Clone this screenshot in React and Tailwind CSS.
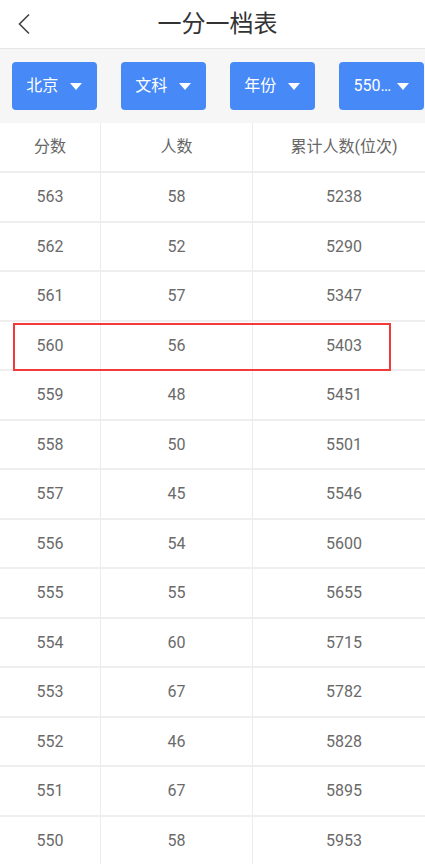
import React from 'react';

const rows = [
  [563, 58, 5238],
  [562, 52, 5290],
  [561, 57, 5347],
  [560, 56, 5403],
  [559, 48, 5451],
  [558, 50, 5501],
  [557, 45, 5546],
  [556, 54, 5600],
  [555, 55, 5655],
  [554, 60, 5715],
  [553, 67, 5782],
  [552, 46, 5828],
  [551, 67, 5895],
  [550, 58, 5953],
];

const filters = [
  { label: '北京', gap: 'gap-[12px]' },
  { label: '文科', gap: 'gap-[12px]' },
  { label: '年份', gap: 'gap-[12px]' },
  { label: '550…', gap: 'gap-[6px]' },
];

const Caret = () => (
  <svg width="12" height="7" viewBox="0 0 12 7">
    <path d="M0 0 L12 0 L6 7 Z" fill="#fff" />
  </svg>
);

const App = () => {
  return (
    <div className="w-[425px] h-[864px] overflow-hidden bg-white font-['Roboto','Noto_Sans_CJK_SC',sans-serif]">
      {/* top bar */}
      <div className="relative h-[49px] border-b border-[#e6e6e6] flex items-center justify-center">
        <svg className="absolute left-[17px] top-[13px]" width="14" height="22" viewBox="0 0 14 22">
          <path d="M12 1.5 L2.5 11 L12 20.5" fill="none" stroke="#444" strokeWidth="1.6" />
        </svg>
        <h1 className="ml-[10px] text-[24px] text-[#333] leading-none">一分一档表</h1>
      </div>

      {/* filters */}
      <div className="h-[74px] bg-[#f6f6f6] flex items-center gap-[24.5px] px-[12px]">
        {filters.map((f) => (
          <div
            key={f.label}
            className={`shrink-0 w-[84.5px] h-[48.5px] rounded-[4px] bg-[#4689f7] flex items-center justify-center ${f.gap}`}
          >
            <span className="text-white text-[16px] leading-none">{f.label}</span>
            <Caret />
          </div>
        ))}
      </div>

      {/* table, a little wider than the screen */}
      <div className="w-[435px]">
        <div className="grid grid-cols-[101px_152px_182px] h-[50px] border-b-2 border-[#eeeeee] text-[16px] text-[#666]">
          <div className="flex items-center justify-center border-r border-[#ececec]">分数</div>
          <div className="flex items-center justify-center border-r border-[#ececec]">人数</div>
          <div className="flex items-center justify-center">累计人数(位次)</div>
        </div>
        {rows.map(([score, count, total]) => (
          <div
            key={score}
            className="relative grid grid-cols-[101px_152px_182px] h-[49.5px] border-b-2 border-[#eeeeee] text-[16px] text-[#6a6a6a]"
          >
            <div className="flex items-center justify-center pt-[1px] border-r border-[#ececec]">{score}</div>
            <div className="flex items-center justify-center pt-[1px] border-r border-[#ececec]">{count}</div>
            <div className="flex items-center justify-center pt-[1px]">{total}</div>
            {score === 560 && (
              <div className="absolute left-[13px] top-[1px] w-[378px] h-[48px] border-2 border-[#f23a3a]" />
            )}
          </div>
        ))}
      </div>
    </div>
  );
};

export default App;
